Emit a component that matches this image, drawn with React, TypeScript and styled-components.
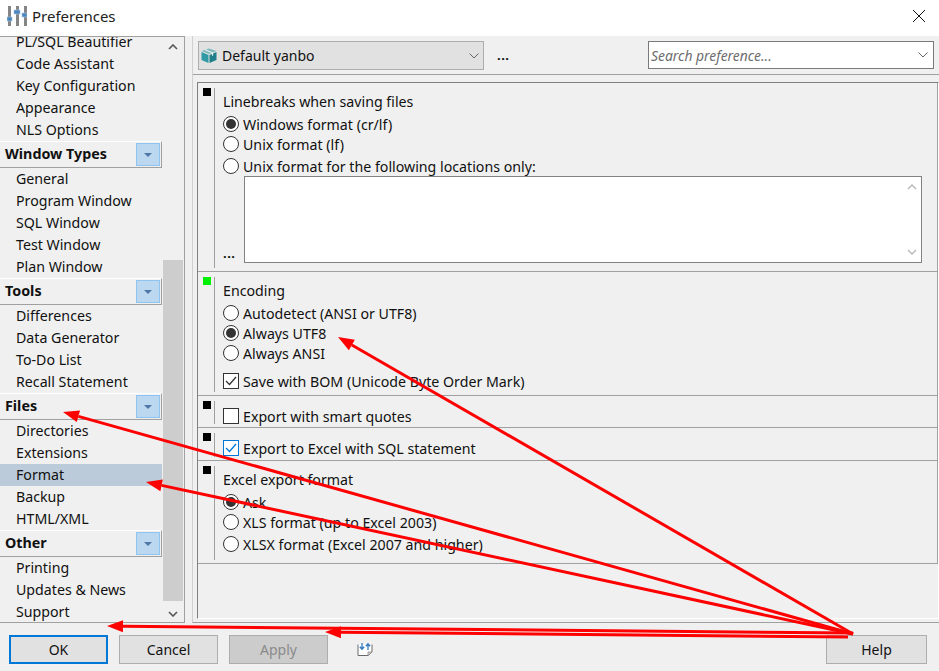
import styled, { createGlobalStyle } from 'styled-components'

const GlobalStyle = createGlobalStyle`
  html, body {
    margin: 0;
    padding: 0;
    background: #f0f0f0;
  }

  body {
    font-family: "Noto Sans", "Open Sans", sans-serif;
    font-size: 14.2px;
    color: #111;
  }
`

const Dialog = styled.div`
  position: relative;
  width: 939px;
  height: 671px;
  overflow: hidden;
  background: #f0f0f0;
`

const TitleBar = styled.header`
  height: 36px;
  box-sizing: border-box;
  display: flex;
  align-items: center;
  padding: 0 14px 4px 7px;
  background: #fff;
`

const TitleText = styled.span`
  margin-left: 5px;
  font-size: 15px;
  color: #222;
`

const CloseButton = styled.svg`
  margin-left: auto;
  width: 12px;
  height: 12px;
  stroke: #111;
  stroke-width: 1;
  fill: none;
`

const Main = styled.main`
  height: 587px;
  display: flex;
`

const Sidebar = styled.aside`
  width: 184px;
  display: flex;
  border-top: 1px solid #a0a0a0;
  border-bottom: 1px solid #a0a0a0;
  border-right: 1px solid #a0a0a0;
  overflow: hidden;
`

const NavList = styled.nav`
  width: 162px;
  margin-top: -6px;
  flex-shrink: 0;
`

const NavItem = styled.div<{ $active?: boolean }>`
  height: 22px;
  line-height: 21px;
  padding-left: 16px;
  white-space: nowrap;
  background: ${(p) => (p.$active ? '#bccbd9' : 'transparent')};
`

const NavHeader = styled.div`
  height: 27px;
  box-sizing: border-box;
  display: flex;
  align-items: center;
  justify-content: space-between;
  padding: 0 1px 0 5px;
  font-size: 14.3px;
  font-weight: 700;
  border-top: 1px solid #fff;
  border-bottom: 1px solid #a0a0a0;
  border-right: 1px solid #a0a0a0;
`

const NavHeaderText = styled.span`
  margin-bottom: 2px;
`

const Expander = styled.span`
  width: 24px;
  height: 23px;
  box-sizing: border-box;
  display: flex;
  align-items: center;
  justify-content: center;
  background: #bcd8f0;
  border: 1px solid #90c4f0;

  &::after {
    content: '';
    border-left: 4px solid transparent;
    border-right: 4px solid transparent;
    border-top: 4px solid #4f77a8;
  }
`

const ScrollBar = styled.div`
  width: 20px;
  margin-left: 1px;
  display: flex;
  flex-direction: column;
  align-items: stretch;
`

const ScrollArrow = styled.svg`
  width: 10px;
  height: 6px;
  margin: 7px 5px;
  stroke: #555;
  stroke-width: 1.6;
  fill: none;
  flex-shrink: 0;
`

const ScrollThumb = styled.div`
  height: 341px;
  margin-top: 203px;
  background: #cdcdcd;
`

const BottomArrow = styled(ScrollArrow)`
  margin-top: auto;
  margin-bottom: 5px;
`

const SettingsPane = styled.section`
  flex: 1;
  margin-left: 7px;
  display: flex;
  flex-direction: column;
  border-left: 1px solid #d0d0d0;
  border-bottom: 1px solid #a0a0a0;
`

const Toolbar = styled.div`
  height: 39px;
  flex-shrink: 0;
  box-sizing: border-box;
  display: flex;
  align-items: flex-start;
  padding: 5px 5px 0 5px;
  border-bottom: 1px solid #a0a0a0;
`

const ProfileSelect = styled.div`
  width: 286px;
  height: 29px;
  box-sizing: border-box;
  display: flex;
  align-items: center;
  padding: 0 4px 0 2px;
  background: #e1e1e1;
  border: 1px solid #adadad;
`

const ProfileName = styled.span`
  margin-left: 5px;
  font-size: 14px;
`

const Chevron = styled.svg`
  margin-left: auto;
  width: 10px;
  height: 6px;
  stroke: #666;
  stroke-width: 1;
  fill: none;
`

const Dots = styled.span`
  margin: 3px 0 0 13px;
  font-weight: 700;
  font-size: 13px;
  line-height: 22px;
  letter-spacing: 0.5px;
`

const SearchBox = styled.div`
  width: 286px;
  height: 28px;
  box-sizing: border-box;
  margin-left: auto;
  display: flex;
  align-items: center;
  padding: 0 5px 0 2px;
  background: #fff;
  border: 1px solid #7a7a7a;
  font-size: 13.9px;
  font-style: italic;
  color: #6d6d6d;
`

const OptionsFrame = styled.div`
  flex: 1;
  margin: 7px 0 3px 4px;
  border-top: 1px solid #808080;
  border-left: 1px solid #808080;
  border-right: 1px solid #fff;
  border-bottom: 1px solid #fff;
`

const Section = styled.div<{ $height: number }>`
  height: ${(p) => p.$height}px;
  box-sizing: border-box;
  display: flex;
  padding: 5px 0 3px 5px;
  border-bottom: 1px solid #a0a0a0;
  border-right: 1px solid #a0a0a0;
`

const Marker = styled.span<{ $on?: boolean }>`
  width: 8px;
  height: 8px;
  flex-shrink: 0;
  background: ${(p) => (p.$on ? '#00f000' : '#000')};
`

const SectionBody = styled.div`
  flex: 1;
  position: relative;
  margin-left: 3px;
  padding-left: 8px;
  border-left: 1px solid #a0a0a0;
`

const GroupLabel = styled.div<{ $top: number }>`
  height: 20px;
  line-height: 20px;
  margin-top: ${(p) => p.$top}px;
`

const OptionRow = styled.label<{ $top?: number }>`
  height: 20px;
  display: flex;
  align-items: center;
  gap: 4px;
  margin-top: ${(p) => p.$top ?? 0}px;
  white-space: nowrap;
`

const Radio = styled.span<{ $checked?: boolean }>`
  width: 16px;
  height: 16px;
  box-sizing: border-box;
  display: flex;
  align-items: center;
  justify-content: center;
  border: 1px solid #333;
  border-radius: 50%;
  background: #fff;

  &::after {
    content: '';
    display: ${(p) => (p.$checked ? 'block' : 'none')};
    width: 10px;
    height: 10px;
    border-radius: 50%;
    background: #333;
  }
`

const CheckBox = styled.span<{ $focus?: boolean }>`
  width: 16px;
  height: 16px;
  box-sizing: border-box;
  display: flex;
  align-items: center;
  justify-content: center;
  background: #fff;
  border: 1px solid ${(p) => (p.$focus ? '#0078d7' : '#333')};
  color: ${(p) => (p.$focus ? '#0078d7' : '#333')};
`

const CheckMark = styled.svg`
  width: 12px;
  height: 10px;
  stroke: currentColor;
  stroke-width: 1.3;
  fill: none;
`

const LocationsRow = styled.div`
  display: flex;
  align-items: flex-end;
`

const MoreDots = styled.span`
  width: 21px;
  font-weight: 700;
  font-size: 13px;
  line-height: 20px;
  letter-spacing: 0.5px;
`

const LocationsBox = styled.div`
  width: 678px;
  height: 87px;
  box-sizing: border-box;
  display: flex;
  flex-direction: column;
  justify-content: space-between;
  align-items: flex-end;
  padding: 7px 4px 7px 0;
  background: #fff;
  border: 1px solid #828282;
`

const FaintArrow = styled.svg`
  width: 10px;
  height: 6px;
  stroke: #bbb;
  stroke-width: 1.5;
  fill: none;
`

const BottomBar = styled.footer`
  height: 48px;
  display: flex;
  align-items: flex-start;
  gap: 11px;
  padding: 12px 12px 0 9px;
`

const ActionButton = styled.button<{ $primary?: boolean; $disabled?: boolean }>`
  width: 99px;
  height: 29px;
  box-sizing: border-box;
  padding: 0;
  font-family: inherit;
  font-size: 14px;
  color: ${(p) => (p.$disabled ? '#8a8a8a' : '#111')};
  background: ${(p) => (p.$disabled ? '#cccccc' : '#e1e1e1')};
  border: ${(p) => (p.$primary ? '2px solid #0078d7' : '1px solid #adadad')};
`

const HelpButton = styled(ActionButton)`
  width: 101px;
  margin-left: auto;
`

const SyncIcon = styled.svg`
  width: 16px;
  height: 13px;
  margin: 8px 0 0 18px;
`

const ArrowLayer = styled.svg`
  position: absolute;
  left: 0;
  top: 0;
  width: 939px;
  height: 671px;
  pointer-events: none;
`

const navGroups = [
  {
    items: ['PL/SQL Beautifier', 'Code Assistant', 'Key Configuration', 'Appearance', 'NLS Options'],
  },
  {
    title: 'Window Types',
    items: ['General', 'Program Window', 'SQL Window', 'Test Window', 'Plan Window'],
  },
  {
    title: 'Tools',
    items: ['Differences', 'Data Generator', 'To-Do List', 'Recall Statement'],
  },
  {
    title: 'Files',
    items: ['Directories', 'Extensions', 'Format', 'Backup', 'HTML/XML'],
  },
  {
    title: 'Other',
    items: ['Printing', 'Updates & News', 'Support'],
  },
]

const arrows = [
  { from: [853, 634], to: [338, 337] },
  { from: [853, 634], to: [63, 412] },
  { from: [853, 634], to: [146, 482] },
  { from: [853, 633], to: [107, 626] },
  { from: [848, 637], to: [325, 632] },
]

function Arrow({ from, to }: { from: number[]; to: number[] }) {
  const dx = from[0] - to[0]
  const dy = from[1] - to[1]
  const len = Math.hypot(dx, dy)
  const ux = dx / len
  const uy = dy / len
  const bx = to[0] + ux * 16
  const by = to[1] + uy * 16
  const head = `${to[0]},${to[1]} ${bx - uy * 6},${by + ux * 6} ${bx + uy * 6},${by - ux * 6}`
  return (
    <>
      <line x1={from[0]} y1={from[1]} x2={bx} y2={by} stroke="#fe0000" strokeWidth="3" />
      <polygon points={head} fill="#fe0000" />
    </>
  )
}

function SlidersLogo() {
  return (
    <svg width="20" height="20" viewBox="0 0 20 20">
      <rect x="1" y="0" width="3" height="20" fill="#858585" />
      <rect x="9" y="0" width="3" height="20" fill="#858585" />
      <rect x="17" y="0" width="3" height="20" fill="#858585" />
      <rect x="0" y="11" width="5" height="4" fill="#4a85bd" stroke="#a8c8e4" strokeWidth="0.6" />
      <rect x="7" y="4" width="6" height="4" fill="#4a85bd" stroke="#a8c8e4" strokeWidth="0.6" />
      <rect x="15" y="7" width="5" height="4" fill="#4a85bd" stroke="#a8c8e4" strokeWidth="0.6" />
    </svg>
  )
}

function PackageIcon() {
  return (
    <svg width="16" height="15" viewBox="0 0 16 15">
      <path d="M8 0.5 15.5 3 8 6 0.5 3Z" fill="#7fb8bb" />
      <path d="M0.5 4 7.5 7v8L0.5 12Z" fill="#2f9aa5" />
      <path d="M15.5 4 8.5 7v8l7-3Z" fill="#1f7f8a" />
      <path d="M4 1.8 11.5 4.8v3" fill="none" stroke="#e6f2f2" strokeWidth="1.2" />
    </svg>
  )
}

function SyncGlyph() {
  return (
    <SyncIcon viewBox="0 0 16 13">
      <path d="M1 1.5V12.5H11L15 9V1.5" fill="#fff" stroke="#6a6a6a" strokeWidth="1" />
      <path d="M11 12.5V9H15Z" fill="#d8d8d8" stroke="#8a8a8a" strokeWidth="0.8" />
      <path d="M5 0V6M2.8 3.8 5 6.2 7.2 3.8" fill="none" stroke="#2f78bd" strokeWidth="1.3" />
      <path d="M11 7V1M8.8 3.2 11 0.8 13.2 3.2" fill="none" stroke="#2f78bd" strokeWidth="1.3" />
    </SyncIcon>
  )
}

function Check() {
  return (
    <CheckMark viewBox="0 0 12 10">
      <path d="M1 5 4.5 8.5 11 1" />
    </CheckMark>
  )
}

export default function App() {
  return (
    <Dialog>
      <GlobalStyle />
      <TitleBar>
        <SlidersLogo />
        <TitleText>Preferences</TitleText>
        <CloseButton viewBox="0 0 12 12">
          <path d="M0 0 12 12M12 0 0 12" />
        </CloseButton>
      </TitleBar>

      <Main>
        <Sidebar>
          <NavList>
            {navGroups.map((group) => (
              <div key={group.items[0]}>
                {group.title && (
                  <NavHeader>
                    <NavHeaderText>{group.title}</NavHeaderText>
                    <Expander />
                  </NavHeader>
                )}
                {group.items.map((item) => (
                  <NavItem key={item} $active={item === 'Format'}>
                    {item}
                  </NavItem>
                ))}
              </div>
            ))}
          </NavList>
          <ScrollBar>
            <ScrollArrow viewBox="0 0 10 6">
              <path d="M1 5 5 1 9 5" />
            </ScrollArrow>
            <ScrollThumb />
            <BottomArrow viewBox="0 0 10 6">
              <path d="M1 1 5 5 9 1" />
            </BottomArrow>
          </ScrollBar>
        </Sidebar>

        <SettingsPane>
          <Toolbar>
            <ProfileSelect>
              <PackageIcon />
              <ProfileName>Default yanbo</ProfileName>
              <Chevron viewBox="0 0 10 6">
                <path d="M0.5 0.5 5 5 9.5 0.5" />
              </Chevron>
            </ProfileSelect>
            <Dots>...</Dots>
            <SearchBox>
              Search preference...
              <Chevron viewBox="0 0 10 6">
                <path d="M0.5 0.5 5 5 9.5 0.5" />
              </Chevron>
            </SearchBox>
          </Toolbar>

          <OptionsFrame>
            <Section $height={189}>
              <Marker />
              <SectionBody>
                <GroupLabel $top={4}>Linebreaks when saving files</GroupLabel>
                <OptionRow $top={2}>
                  <Radio $checked />
                  Windows format (cr/lf)
                </OptionRow>
                <OptionRow>
                  <Radio />
                  Unix format (lf)
                </OptionRow>
                <OptionRow $top={2}>
                  <Radio />
                  Unix format for the following locations only:
                </OptionRow>
                <LocationsRow>
                  <MoreDots>...</MoreDots>
                  <LocationsBox>
                    <FaintArrow viewBox="0 0 10 6">
                      <path d="M1 5 5 1 9 5" />
                    </FaintArrow>
                    <FaintArrow viewBox="0 0 10 6">
                      <path d="M1 1 5 5 9 1" />
                    </FaintArrow>
                  </LocationsBox>
                </LocationsRow>
              </SectionBody>
            </Section>

            <Section $height={124}>
              <Marker $on />
              <SectionBody>
                <GroupLabel $top={4}>Encoding</GroupLabel>
                <OptionRow $top={2}>
                  <Radio />
                  Autodetect (ANSI or UTF8)
                </OptionRow>
                <OptionRow>
                  <Radio $checked />
                  Always UTF8
                </OptionRow>
                <OptionRow>
                  <Radio />
                  Always ANSI
                </OptionRow>
                <OptionRow $top={8}>
                  <CheckBox>
                    <Check />
                  </CheckBox>
                  Save with BOM (Unicode Byte Order Mark)
                </OptionRow>
              </SectionBody>
            </Section>

            <Section $height={32}>
              <Marker />
              <SectionBody>
                <OptionRow $top={5}>
                  <CheckBox />
                  Export with smart quotes
                </OptionRow>
              </SectionBody>
            </Section>

            <Section $height={33}>
              <Marker />
              <SectionBody>
                <OptionRow $top={5}>
                  <CheckBox $focus>
                    <Check />
                  </CheckBox>
                  Export to Excel with SQL statement
                </OptionRow>
              </SectionBody>
            </Section>

            <Section $height={103}>
              <Marker />
              <SectionBody>
                <GroupLabel $top={4}>Excel export format</GroupLabel>
                <OptionRow $top={2}>
                  <Radio $checked />
                  Ask
                </OptionRow>
                <OptionRow>
                  <Radio />
                  XLS format (up to Excel 2003)
                </OptionRow>
                <OptionRow $top={2}>
                  <Radio />
                  XLSX format (Excel 2007 and higher)
                </OptionRow>
              </SectionBody>
            </Section>
          </OptionsFrame>
        </SettingsPane>
      </Main>

      <BottomBar>
        <ActionButton $primary>OK</ActionButton>
        <ActionButton>Cancel</ActionButton>
        <ActionButton $disabled>Apply</ActionButton>
        <SyncGlyph />
        <HelpButton>Help</HelpButton>
      </BottomBar>

      <ArrowLayer viewBox="0 0 939 671">
        {arrows.map((arrow) => (
          <Arrow key={arrow.to.join('-')} from={arrow.from} to={arrow.to} />
        ))}
      </ArrowLayer>
    </Dialog>
  )
}
